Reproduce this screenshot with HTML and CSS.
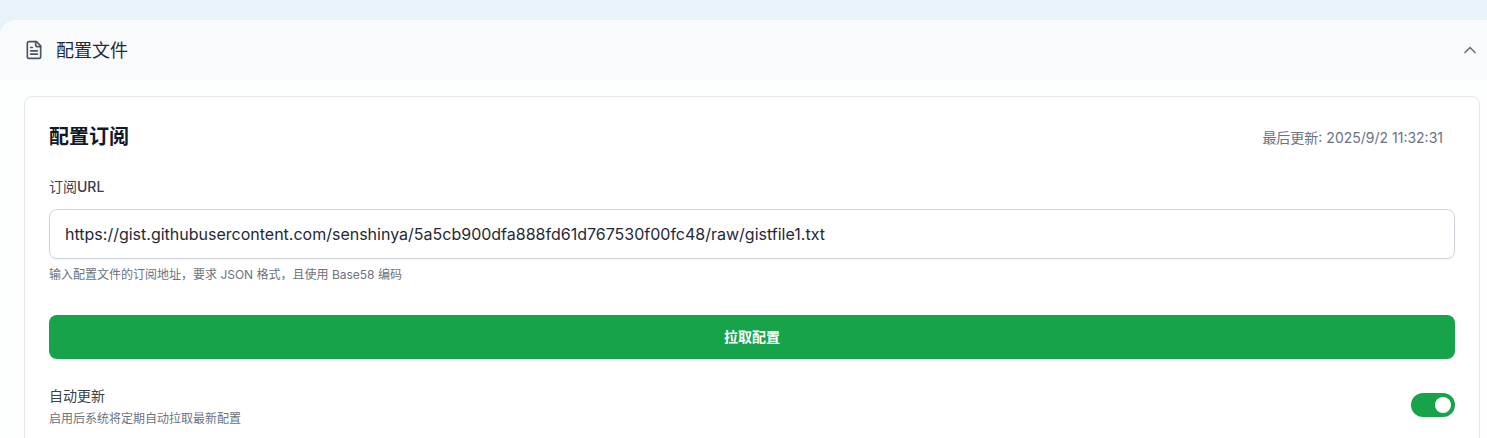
FILE: index.html
```html
<!DOCTYPE html>
<html lang="zh-CN">
<head>
<meta charset="UTF-8" />
<meta name="viewport" content="width=device-width, initial-scale=1.0" />
<title>配置文件</title>
<link rel="stylesheet" href="styles.css">
</head>
<body>
<section class="panel">
  <div class="panel-header">
    <div class="panel-title">
      <svg class="doc-icon" width="20" height="20" viewBox="0 0 24 24" fill="none" stroke="currentColor" stroke-width="2" stroke-linecap="round" stroke-linejoin="round">
        <path d="M15 2H6a2 2 0 0 0-2 2v16a2 2 0 0 0 2 2h12a2 2 0 0 0 2-2V7Z" />
        <path d="M14 2v4a2 2 0 0 0 2 2h4" />
        <path d="M8 13h8" />
        <path d="M8 17h8" />
        <path d="M8 9h2" />
      </svg>
      <span class="panel-name">配置文件</span>
    </div>
    <svg class="chevron" width="20" height="20" viewBox="0 0 24 24" fill="none" stroke="currentColor" stroke-width="2" stroke-linecap="round" stroke-linejoin="round">
      <path d="m18 15-6-6-6 6" />
    </svg>
  </div>

  <div class="panel-body">
    <div class="card">
      <div class="card-head">
        <h2>配置订阅</h2>
        <span class="updated">最后更新: 2025/9/2 11:32:31</span>
      </div>

      <label class="field-label" for="url">订阅<span class="latin">URL</span></label>
      <input class="url-input" id="url" type="text" value="https://gist.githubusercontent.com/senshinya/5a5cb900dfa888fd61d767530f00fc48/raw/gistfile1.txt" />
      <p class="hint">输入配置文件的订阅地址，要求 JSON 格式，且使用 Base58 编码</p>

      <button class="pull-btn">拉取配置</button>

      <div class="auto-row">
        <div>
          <div class="auto-title">自动更新</div>
          <div class="hint auto-hint">启用后系统将定期自动拉取最新配置</div>
        </div>
        <span class="toggle"><span class="knob"></span></span>
      </div>
    </div>
  </div>
</section>
</body>
</html>
```

FILE: styles.css
```css
html, body {
  height: 100%;
}
body {
  margin: 0;
  padding-top: 20px;
  box-sizing: border-box;
  overflow: hidden;
  background: #e8f3f9;
  font-family: Inter, "Noto Sans CJK SC", sans-serif;
  color: #111827;
}
.panel {
  background: #fdfefe;
  border-radius: 16px 0 0 0;
  overflow: hidden;
}
.panel-header {
  height: 60px;
  padding: 0 7px 0 24px;
  display: flex;
  justify-content: space-between;
  align-items: center;
  background: #f9fafb;
}
.panel-title {
  display: flex;
  align-items: center;
  gap: 12px;
  font-size: 18px;
  color: #1f2937;
}
.panel-name {
  padding-bottom: 3px;
}
.doc-icon {
  color: #4b5563;
}
.chevron {
  color: #6b7280;
}
.panel-body {
  padding: 16px 7px 24px 24px;
}
.card {
  background: #fff;
  border: 1px solid #e5e7eb;
  border-radius: 8px;
  padding: 26px 24px 24px;
}
.card-head {
  display: flex;
  justify-content: space-between;
  align-items: center;
  padding-right: 12px;
  margin-bottom: 26px;
}
.card-head h2 {
  margin: 0;
  font-size: 20px;
  line-height: 28px;
  font-weight: 700;
}
.updated {
  font-size: 14px;
  color: #6b7280;
}
.field-label {
  display: block;
  font-size: 14px;
  line-height: 20px;
  font-weight: 400;
  color: #374151;
  margin-bottom: 12px;
}
.latin {
  font-weight: 500;
}
.url-input {
  display: block;
  width: 100%;
  height: 50px;
  box-sizing: border-box;
  padding: 0 15px;
  border: 1px solid #d1d5db;
  border-radius: 8px;
  box-shadow: 0 1px 2px rgba(0,0,0,0.05);
  font-family: inherit;
  font-size: 16px;
  color: #1f2937;
}
.hint {
  margin: 8px 0 0;
  font-size: 12px;
  line-height: 16px;
  color: #6b7280;
}
.pull-btn {
  display: block;
  width: 100%;
  height: 44px;
  margin-top: 32px;
  padding: 0 0 2px;
  border: none;
  border-radius: 8px;
  background: #16a34a;
  color: #fff;
  font-family: inherit;
  font-size: 14px;
  font-weight: 600;
}
.auto-row {
  display: flex;
  justify-content: space-between;
  align-items: center;
  margin-top: 25px;
}
.auto-title {
  font-size: 14px;
  line-height: 24px;
  font-weight: 400;
  color: #374151;
}
.auto-hint {
  margin-top: 3px;
}
.toggle {
  width: 44px;
  height: 24px;
  margin-bottom: 2px;
  border-radius: 12px;
  background: #16a34a;
  display: flex;
  align-items: center;
  justify-content: flex-end;
  padding-right: 4px;
  box-sizing: border-box;
}
.knob {
  width: 16px;
  height: 16px;
  border-radius: 50%;
  background: #fff;
}
```
